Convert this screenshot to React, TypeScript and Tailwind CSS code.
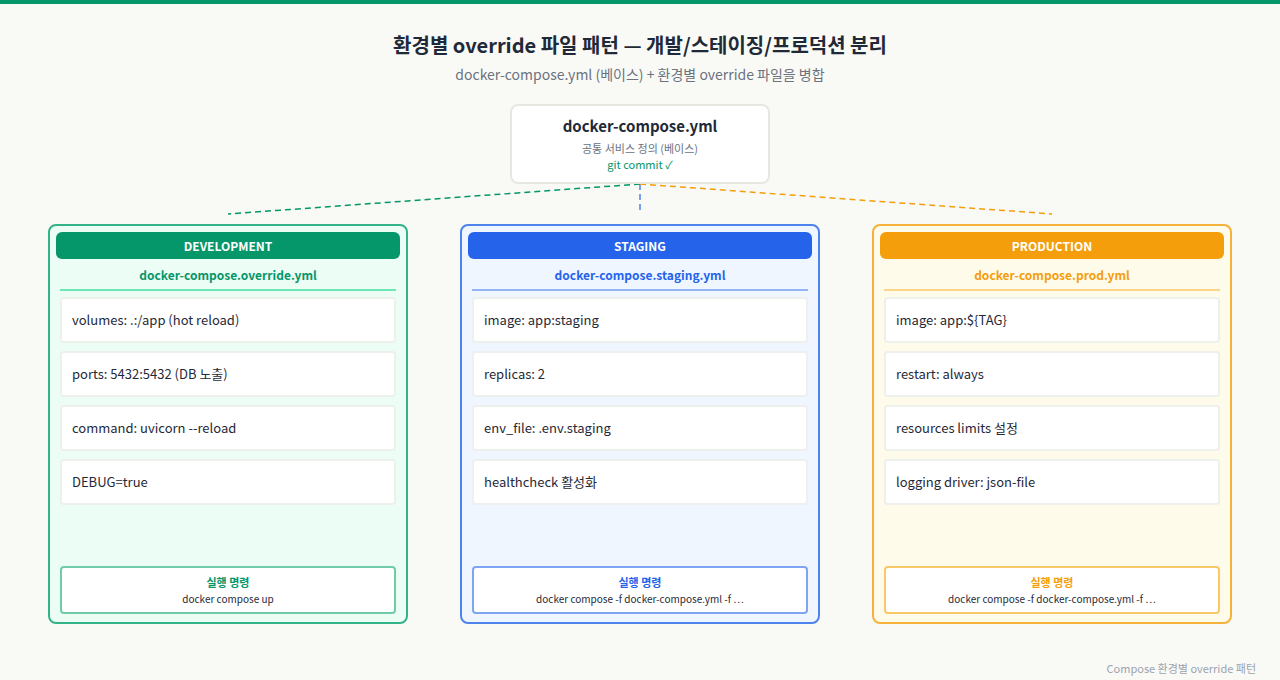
const ENVS = [
  {
    name: "DEVELOPMENT",
    file: "docker-compose.override.yml",
    items: ["volumes: .:/app (hot reload)", "ports: 5432:5432 (DB 노출)", "command: uvicorn --reload", "DEBUG=true"],
    cmd: "docker compose up",
    box: "border-[#34b38a] bg-[#ecfdf5]",
    head: "bg-[#059669]",
    text: "text-[#059669]",
    line: "bg-[#6ee7b7]",
    cmdBorder: "border-[#6fcba8]",
  },
  {
    name: "STAGING",
    file: "docker-compose.staging.yml",
    items: ["image: app:staging", "replicas: 2", "env_file: .env.staging", "healthcheck 활성화"],
    cmd: "docker compose -f docker-compose.yml -f …",
    box: "border-[#4f83ec] bg-[#eff6ff]",
    head: "bg-[#2563eb]",
    text: "text-[#2563eb]",
    line: "bg-[#93b4f5]",
    cmdBorder: "border-[#7ea4f2]",
  },
  {
    name: "PRODUCTION",
    file: "docker-compose.prod.yml",
    items: ["image: app:${TAG}", "restart: always", "resources limits 설정", "logging driver: json-file"],
    cmd: "docker compose -f docker-compose.yml -f …",
    box: "border-[#f5b23a] bg-[#fffbeb]",
    head: "bg-[#f59e0b]",
    text: "text-[#f59e0b]",
    line: "bg-[#fcd58a]",
    cmdBorder: "border-[#f8c767]",
  },
];

export default function App() {
  return (
    <div
      className="w-[1280px] h-[680px] bg-[#f9faf6] border-t-4 border-[#059669] flex flex-col items-center text-[#1f2937]"
      style={{ fontFamily: '"Noto Sans CJK KR", "Noto Sans", sans-serif' }}
    >
      <h1 className="mt-[26px] text-[20px] font-bold leading-[30px]">
        환경별 override 파일 패턴 — 개발/스테이징/프로덕션 분리
      </h1>
      <p className="mt-[4px] text-[14px] text-[#6b7280] leading-[20px]">
        docker-compose.yml (베이스) + 환경별 override 파일을 병합
      </p>

      <div className="mt-[20px] w-[260px] h-[80px] bg-white border-2 border-[#e5e7e1] rounded-lg flex flex-col items-center justify-center">
        <div className="text-[15px] font-bold leading-[20px]">docker-compose.yml</div>
        <div className="text-[11px] text-[#6b7280] leading-[16px] mt-[4px]">공통 서비스 정의 (베이스)</div>
        <div className="text-[11px] text-[#059669] leading-[16px]">git commit ✓</div>
      </div>

      <svg width="1280" height="40" className="block">
        <line x1="640" y1="0" x2="228" y2="30" stroke="#059669" strokeWidth="1.5" strokeDasharray="6 4" />
        <line x1="640" y1="0" x2="640" y2="26" stroke="#2563eb" strokeWidth="1.5" strokeDasharray="6 4" opacity="0.8" />
        <line x1="640" y1="0" x2="1052" y2="30" stroke="#f59e0b" strokeWidth="1.5" strokeDasharray="6 4" />
      </svg>

      <div className="flex gap-[52px]">
        {ENVS.map((e) => (
          <div key={e.name} className={`w-[360px] h-[400px] border-2 rounded-lg p-[6px] flex flex-col ${e.box}`}>
            <div className={`h-[27px] rounded-md flex items-center justify-center text-white text-[12px] font-bold ${e.head}`}>
              {e.name}
            </div>
            <div className="mx-[4px] mt-[7px]">
              <div className={`text-center text-[12px] font-bold leading-[18px] ${e.text}`}>{e.file}</div>
              <div className={`h-[2px] mt-[5px] ${e.line}`} />
            </div>
            <div className="mx-[4px] mt-[6px] flex flex-col gap-[8px]">
              {e.items.map((it) => (
                <div key={it} className="h-[46px] bg-white border-2 border-[#eef0ec] rounded-[4px] flex items-center px-[10px] text-[13px] text-[#1f2937]">
                  {it}
                </div>
              ))}
            </div>
            <div className={`mx-[4px] mt-auto mb-[2px] h-[48px] bg-white border-2 rounded-[4px] flex flex-col items-center justify-center ${e.cmdBorder}`}>
              <div className={`text-[11px] font-bold leading-[16px] ${e.text}`}>실행 명령</div>
              <div className="text-[10px] text-[#1f2937] leading-[16px] mt-[1px]">{e.cmd}</div>
            </div>
          </div>
        ))}
      </div>

      <div className="w-[1232px] text-right text-[11px] text-[#9ca3af] mt-[36px]">Compose 환경별 override 패턴</div>
    </div>
  );
}
